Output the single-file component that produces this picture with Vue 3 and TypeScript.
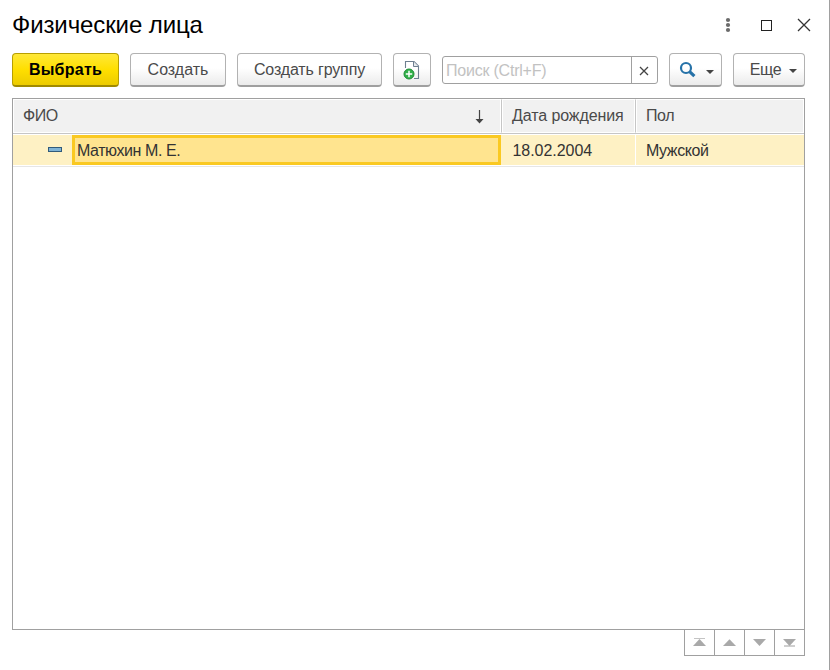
<script setup lang="ts">
import { ref } from 'vue'

interface Person {
  name: string
  birthDate: string
  gender: string
}

const people = ref<Person[]>([
  { name: 'Матюхин М. Е.', birthDate: '18.02.2004', gender: 'Мужской' },
])
const query = ref('')
</script>

<template>
  <div class="window">
    <header class="titlebar">
      <h1 class="title">Физические лица</h1>
      <svg class="window-icons" width="100" height="20" viewBox="0 0 100 20">
        <g fill="#6b6b6b">
          <circle cx="8" cy="5" r="2.1" />
          <circle cx="8" cy="10" r="2.1" />
          <circle cx="8" cy="15" r="2.1" />
        </g>
        <rect x="41.5" y="5.5" width="10" height="10" fill="none" stroke="#222" />
        <path d="M78 4 90 16M90 4 78 16" fill="none" stroke="#333" stroke-width="1.3" />
      </svg>
    </header>

    <div class="toolbar">
      <button class="btn primary"><span class="t-select">Выбрать</span></button>
      <button class="btn create"><span>Создать</span></button>
      <button class="btn group"><span class="t-group">Создать группу</span></button>
      <button class="btn copy">
        <svg width="18" height="20" viewBox="0 0 18 20">
          <path d="M2.5 8V1.5H11L15.5 6V18.5H11" fill="none" stroke="#6e7f90" stroke-width="1.1" />
          <path d="M10.5 1.5V6.5H15.5" fill="#e4e8ec" stroke="#6e7f90" />
          <circle cx="6" cy="14" r="5" fill="#32b14a" stroke="#1d8c35" />
          <path d="M6 10.8V17.2M2.8 14H9.2" stroke="#fff" stroke-width="1.5" />
        </svg>
      </button>
      <div class="search">
        <input v-model="query" class="search-input" placeholder="Поиск (Ctrl+F)" />
        <button class="clear" @click="query = ''">
          <svg width="10" height="10" viewBox="0 0 10 10">
            <path d="M1 1 9 9M9 1 1 9" stroke="#444" stroke-width="1.3" />
          </svg>
        </button>
      </div>
      <button class="btn find">
        <svg width="36" height="18" viewBox="0 0 36 18">
          <circle cx="7" cy="7" r="5" fill="none" stroke="#2672a8" stroke-width="2.2" />
          <path d="M10.6 10.6 15.4 15.2" stroke="#2672a8" stroke-width="3.2" />
          <path d="M27 9H35L31 13Z" fill="#444" />
        </svg>
      </button>
      <button class="btn more">
        <span class="t-more">Еще</span>
        <svg width="8" height="4" viewBox="0 0 8 4"><path d="M0 0H8L4 4Z" fill="#444" /></svg>
      </button>
    </div>

    <main class="table">
      <div class="row head">
        <div class="cell">
          <span class="tight">ФИО</span>
          <svg class="sort" width="9" height="14" viewBox="0 0 9 14">
            <path d="M4.5 0V11" stroke="#444" stroke-width="1.2" />
            <path d="M0.5 9H8.5L4.5 13.5Z" fill="#444" />
          </svg>
        </div>
        <div class="cell"><span class="h-date">Дата рождения</span></div>
        <div class="cell"><span class="tight">Пол</span></div>
      </div>
      <div v-for="p in people" :key="p.name" class="row body">
        <div class="name-cell">
          <i class="item-mark"></i>
          <div class="current"><span class="tight">{{ p.name }}</span></div>
        </div>
        <div class="value date"><span>{{ p.birthDate }}</span></div>
        <div class="value"><span class="tight">{{ p.gender }}</span></div>
      </div>
    </main>

    <footer class="pager">
      <button class="page">
        <svg width="13" height="9" viewBox="0 0 13 9"><path d="M1 .5H12" stroke="#c4c4c4" /><path d="M0 8 6.5 1 13 8Z" fill="#a9a9a9" /></svg>
      </button>
      <button class="page">
        <svg width="13" height="9" viewBox="0 0 13 9"><path d="M0 8 6.5 1.2 13 8Z" fill="#a9a9a9" /></svg>
      </button>
      <button class="page">
        <svg width="13" height="9" viewBox="0 0 13 9"><path d="M0 1H13L6.5 8Z" fill="#a9a9a9" /></svg>
      </button>
      <button class="page">
        <svg width="13" height="9" viewBox="0 0 13 9"><path d="M1 8H12" stroke="#c4c4c4" stroke-width="1.6" /><path d="M0 1H13L6.5 8Z" fill="#a9a9a9" /></svg>
      </button>
    </footer>
  </div>
</template>

<style>
body {
  background: #fff;
}
</style>

<style scoped>
.window,
.window * {
  box-sizing: border-box;
}
.window {
  width: 830px;
  height: 670px;
  padding: 0 24px 0 12px;
  border-right: 1px solid #a0a0a0;
  background: #fff;
  font: 16px/20px "Liberation Sans", Arial, sans-serif;
  color: #4a4a4a;
  overflow: hidden;
}
button {
  margin: 0;
  padding: 0;
  font: inherit;
  color: inherit;
}
span {
  white-space: nowrap;
}
svg {
  display: block;
  flex: none;
}
.titlebar {
  display: flex;
  height: 53px;
  width: 808px;
  justify-content: space-between;
}
.title {
  margin: 10px 0 0;
  font-size: 24px;
  line-height: 30px;
  font-weight: 400;
  letter-spacing: -0.1px;
  color: #000;
}
.window-icons {
  margin-top: 15px;
}
.toolbar {
  display: flex;
  width: 793px;
  height: 45px;
  gap: 11px;
}
.btn {
  display: flex;
  align-items: center;
  justify-content: center;
  height: 34px;
  border: 1px solid #b2b2b2;
  border-bottom: 2px solid #9f9f9f;
  border-radius: 4px;
  background: linear-gradient(#fff 0%, #fff 45%, #ebebeb 100%);
  flex: none;
}
.primary {
  width: 107px;
  border-color: #b89f00 #b89f00 #a08a00;
  background: linear-gradient(#ffe838, #ffdf00 50%, #eccb00);
  font-weight: 700;
  color: #000;
}
.t-select {
  letter-spacing: 0.25px;
}
.t-group {
  letter-spacing: -0.15px;
}
.t-more {
  letter-spacing: -0.4px;
}
.create { width: 96px; }
.group { width: 145px; }
.copy { width: 38px; }
.find {
  width: 53px;
  padding-left: 2px;
}
.more {
  width: 72px;
  gap: 8px;
  padding-left: 9px;
}
.more svg {
  margin-top: 3px;
}
.search {
  display: flex;
  width: 216px;
  height: 28px;
  margin-top: 3px;
  border: 1px solid #a0a0a0;
  border-radius: 3px;
  flex: none;
}
.search-input {
  width: 188px;
  padding: 2px 0 0 3px;
  border: 0;
  outline: 0;
  background: transparent;
  font: inherit;
  letter-spacing: -0.22px;
  color: #333;
}
.search-input::placeholder {
  color: #c2c2c2;
  opacity: 1;
}
.clear {
  display: flex;
  flex: 1;
  align-items: center;
  justify-content: center;
  padding: 2px 2px 0 0;
  border: 0;
  border-left: 1px solid #a0a0a0;
  background: transparent;
}
.table {
  width: 793px;
  height: 532px;
  border: 1px solid #a0a0a0;
}
.row {
  display: grid;
  grid-template-columns: 489px 134px 168px;
}
.head {
  height: 35px;
  border-bottom: 1px solid #c6c6c6;
}
.cell {
  display: flex;
  align-items: center;
  padding: 0 15px 1px 9px;
  border: 1px solid #fff;
  border-right: 1px solid #c6c6c6;
  background: #f1f1f1;
  background-clip: padding-box;
  box-shadow: inset -1px 0 #fff;
}
.cell:last-child {
  border-right-color: #fff;
  box-shadow: none;
}
.tight {
  letter-spacing: -0.42px;
}
.h-date {
  letter-spacing: -0.1px;
}
.sort {
  margin: 2px 2px 0 auto;
}
.body {
  height: 33px;
  padding: 1px 0;
  border-bottom: 1px solid #e6e6e6;
  color: #333;
}
.name-cell {
  display: flex;
  align-items: center;
  padding-left: 35px;
  padding-right: 1px;
  background: #fef1c4;
}
.item-mark {
  width: 14px;
  height: 5px;
  margin: 0 10px 2px 0;
  border: 1px solid #315b7b;
  background: #7fb3d5;
}
.current {
  display: flex;
  flex: 1;
  align-items: center;
  height: 30px;
  padding: 2px 0 0 2px;
  border: 3px solid #fac922;
  background: #ffe48f;
}
.value {
  display: flex;
  align-items: center;
  padding: 2px 0 0 10px;
  border-right: 1px solid #fff;
  background: #fef1c4;
}
.value:last-child {
  border-right: 0;
}
.date {
  padding-left: 10.5px;
  letter-spacing: -0.05px;
}
.pager {
  display: flex;
  width: 121px;
  height: 27px;
  margin: -1px 0 0 672px;
  border: 1px solid #a0a0a0;
}
.page {
  display: flex;
  width: 30px;
  align-items: center;
  justify-content: center;
  border: 0;
  border-right: 1px solid #a0a0a0;
  background: #fff;
}
.page:last-child {
  width: 29px;
  border-right: 0;
}
</style>
